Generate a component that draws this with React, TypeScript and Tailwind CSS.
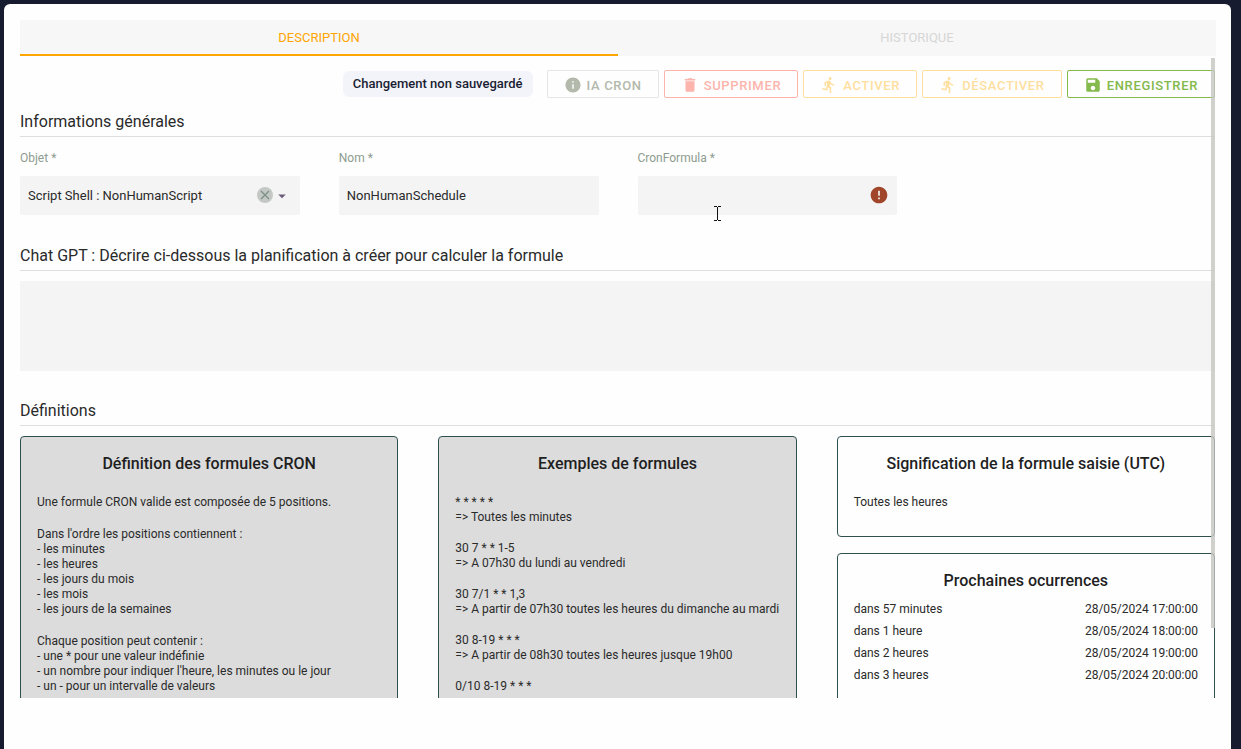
import { useState } from "react"
import type { ReactNode } from "react"
import type { IconType } from "react-icons"
import { MdArrowDropDown, MdDelete, MdDirectionsRun, MdError, MdInfo, MdSave } from "react-icons/md"

const definitions = [
  ["Une formule CRON valide est composée de 5 positions."],
  [
    "Dans l'ordre les positions contiennent :",
    "- les minutes",
    "- les heures",
    "- les jours du mois",
    "- les mois",
    "- les jours de la semaines",
  ],
  [
    "Chaque position peut contenir :",
    "- une * pour une valeur indéfinie",
    "- un nombre pour indiquer l'heure, les minutes ou le jour",
    "- un - pour un intervalle de valeurs",
  ],
]

const examples = [
  ["* * * * *", "=> Toutes les minutes"],
  ["30 7 * * 1-5", "=> A 07h30 du lundi au vendredi"],
  ["30 7/1 * * 1,3", "=> A partir de 07h30 toutes les heures du dimanche au mardi"],
  ["30 8-19 * * *", "=> A partir de 08h30 toutes les heures jusque 19h00"],
  ["0/10 8-19 * * *"],
]

const occurrences = [
  ["dans 57 minutes", "28/05/2024 17:00:00"],
  ["dans 1 heure", "28/05/2024 18:00:00"],
  ["dans 2 heures", "28/05/2024 19:00:00"],
  ["dans 3 heures", "28/05/2024 20:00:00"],
]

function ActionButton({ icon: Icon, label, className }: { icon: IconType; label: string; className: string }) {
  return (
    <button
      type="button"
      className={`flex h-7 items-center gap-[5px] rounded-xs border px-4 pt-0.5 text-[13px] font-medium tracking-wider ${className}`}
    >
      <Icon size={18} />
      <span className="pt-0.5">{label}</span>
    </button>
  )
}

function SectionTitle({ children }: { children: ReactNode }) {
  return <h2 className="border-b border-[#dedede] text-base leading-7 text-[#2a2a2a]">{children}</h2>
}

function Panel({ title, className = "", children }: { title: string; className?: string; children: ReactNode }) {
  return (
    <section className={`rounded border border-[#2f4f4f] px-4 pt-4 ${className}`}>
      <h3 className="text-center text-base leading-[22px] font-medium text-[#1f1f1f]">{title}</h3>
      {children}
    </section>
  )
}

function TextGroups({ groups, className }: { groups: string[][]; className: string }) {
  return (
    <div className={`mt-5 flex flex-col text-xs leading-[15px] whitespace-nowrap ${className}`}>
      {groups.map((lines) => (
        <div key={lines[0]}>
          {lines.map((line) => (
            <p key={line}>{line}</p>
          ))}
        </div>
      ))}
    </div>
  )
}

function App() {
  const [name, setName] = useState("NonHumanSchedule")
  const [formula, setFormula] = useState("")
  const [prompt, setPrompt] = useState("")

  return (
    <div className="h-screen overflow-hidden bg-[#171b30] pt-1 pr-2.5 pl-1 font-[Roboto,sans-serif] text-[#2a2a2a]">
      <main className="relative flex h-full flex-col rounded-t-md bg-[#fefefe] pt-4 pr-4 pl-4">
        <div role="tablist" className="-mr-px grid h-9 shrink-0 grid-cols-2 bg-[#f7f7f7] text-[13px]">
          <button role="tab" aria-selected="true" className="border-b-2 border-[#ffa500] pt-0.5 text-[#ffa500]">
            DESCRIPTION
          </button>
          <button role="tab" aria-selected="false" className="text-[#d6d6d6]">
            HISTORIQUE
          </button>
        </div>

        <div className="relative mt-0.5 mb-[51px] min-h-0 flex-1">
          <div className="h-full overflow-y-auto [scrollbar-width:none]">
            <div className="flex justify-end gap-[5px] pt-3">
              <span className="mt-px mr-[9px] flex h-[26px] items-center rounded-md bg-[#f3f4f9] px-2.5 text-[13px] font-medium text-[#1a1d33]">
                Changement non sauvegardé
              </span>
              <ActionButton icon={MdInfo} label="IA CRON" className="border-[#e4e6e4] text-[#b3b9ab]" />
              <ActionButton icon={MdDelete} label="SUPPRIMER" className="border-[#fcb4ac] text-[#fcb4ac]" />
              <ActionButton icon={MdDirectionsRun} label="ACTIVER" className="border-[#ffdf9f] text-[#ffdf9f]" />
              <ActionButton icon={MdDirectionsRun} label="DÉSACTIVER" className="border-[#ffdf9f] text-[#ffdf9f]" />
              <ActionButton icon={MdSave} label="ENREGISTRER" className="border-[#84b94c] text-[#84b94c]" />
            </div>

            <div className="mt-2.5">
              <SectionTitle>Informations générales</SectionTitle>
            </div>
            <div className="mt-3 grid grid-cols-4 text-[13px]">
              <div className="pr-[19px]">
                <label htmlFor="objet" className="block text-xs leading-[18px] text-[#8e9c90]">
                  Objet *
                </label>
                <div className="relative mt-[9px]">
                  <select id="objet" className="h-[39px] w-full appearance-none rounded-xs bg-[#f4f4f4] px-2">
                    <option>Script Shell : NonHumanScript</option>
                  </select>
                  <button type="button" aria-label="Effacer" className="absolute top-[11px] right-[27px] text-[#7b8f88]">
                    <svg width="16" height="16" viewBox="0 0 16 16" fill="none">
                      <circle cx="8" cy="8" r="8" fill="#c4c8c5" />
                      <path d="M4 4l8 8M12 4l-8 8" stroke="currentColor" strokeWidth="1.2" />
                    </svg>
                  </button>
                  <MdArrowDropDown size={18} className="pointer-events-none absolute top-[11px] right-[9px] text-[#6b5a7a]" />
                </div>
              </div>
              <div className="pr-[19px] pl-5">
                <label htmlFor="nom" className="block text-xs leading-[18px] text-[#8e9c90]">
                  Nom *
                </label>
                <input
                  id="nom"
                  value={name}
                  onChange={(e) => setName(e.target.value)}
                  className="mt-[9px] h-[39px] w-full rounded-xs bg-[#f4f4f4] px-2"
                />
              </div>
              <div className="pr-[19px] pl-5">
                <label htmlFor="formula" className="block text-xs leading-[18px] text-[#8e9c90]">
                  CronFormula *
                </label>
                <div className="relative mt-[9px]">
                  <input
                    id="formula"
                    value={formula}
                    onChange={(e) => setFormula(e.target.value)}
                    className="h-[39px] w-full rounded-xs bg-[#f4f4f4] px-2"
                  />
                  <MdError size={20} className="absolute top-[9px] right-2 text-[#a1452a]" />
                  {/* text cursor */}
                  <svg className="absolute top-[29px] left-[75px]" width="9" height="17" viewBox="0 0 9 17" fill="none">
                    <path d="M1 1.5h3M5 1.5h3M4.5 2v13M1 15.5h3M5 15.5h3" stroke="#111" />
                  </svg>
                </div>
              </div>
            </div>

            <div className="mt-[27px]">
              <SectionTitle>Chat GPT : Décrire ci-dessous la planification à créer pour calculer la formule</SectionTitle>
              <textarea
                aria-label="Description de la planification"
                value={prompt}
                onChange={(e) => setPrompt(e.target.value)}
                className="mt-2.5 block h-[90px] w-full resize-none bg-[#f4f4f4] p-2 text-[13px]"
              />
            </div>

            <div className="mt-[26px]">
              <SectionTitle>Définitions</SectionTitle>
            </div>
            <div className="mt-2.5 grid min-h-[343px] grid-cols-3">
              <div className="flex pr-5">
                <Panel title="Définition des formules CRON" className="w-full bg-[#dcdcdc]">
                  <TextGroups groups={definitions} className="gap-[17px]" />
                </Panel>
              </div>
              <div className="flex px-5">
                <Panel title="Exemples de formules" className="w-full bg-[#dcdcdc]">
                  <TextGroups groups={examples} className="gap-4" />
                </Panel>
              </div>
              <div className="flex flex-col gap-4 pl-5">
                <Panel title="Signification de la formule saisie (UTC)" className="pb-[26px]">
                  <p className="mt-5 text-xs leading-[15px]">Toutes les heures</p>
                </Panel>
                <Panel title="Prochaines ocurrences" className="flex-1">
                  <table className="mt-1.5 w-full text-xs">
                    <tbody>
                      {occurrences.map(([delay, date]) => (
                        <tr key={date} className="h-[22px]">
                          <td>{delay}</td>
                          <td className="text-right">{date}</td>
                        </tr>
                      ))}
                    </tbody>
                  </table>
                </Panel>
              </div>
            </div>
          </div>
          <div className="absolute top-0 right-0 h-[89%] w-1 bg-[#c4c4c0]/80" />
        </div>
      </main>
    </div>
  )
}

export default App
